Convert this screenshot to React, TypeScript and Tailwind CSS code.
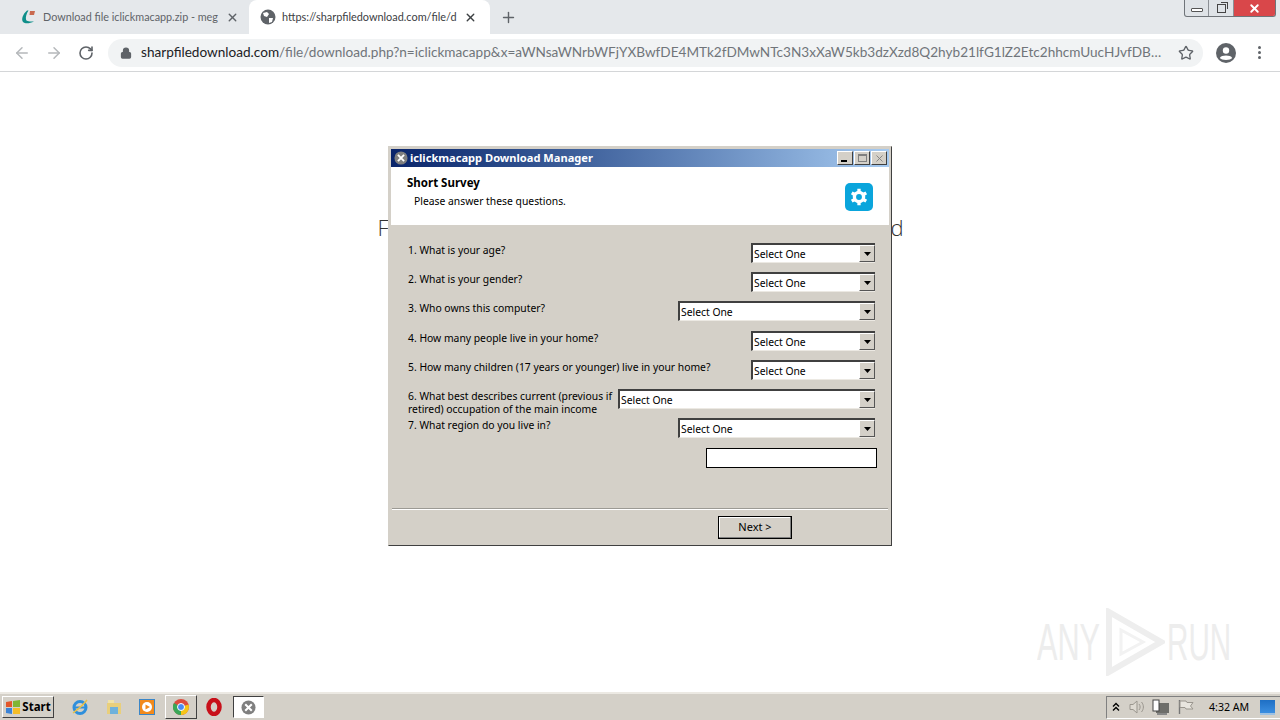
import { ArrowLeft, ArrowRight, Lock, Plus, RotateCw, Star, X } from "lucide-react";
import { JSX } from "react";

const UI_FONT = "font-['Noto_Sans',sans-serif]";

const QUESTIONS: { label: JSX.Element; width: string; height: string }[] = [
  { label: <>1. What is your age?</>, width: "w-[124px]", height: "h-[29px]" },
  { label: <>2. What is your gender?</>, width: "w-[124px]", height: "h-[29px]" },
  { label: <>3. Who owns this computer?</>, width: "w-[197px]", height: "h-[30px]" },
  { label: <>4. How many people live in your home?</>, width: "w-[124px]", height: "h-[29px]" },
  { label: <>5. How many children (17 years or younger) live in your home?</>, width: "w-[124px]", height: "h-[29px]" },
  {
    label: (
      <>
        6. What best describes current (previous if
        <br />
        retired) occupation of the main income
      </>
    ),
    width: "w-[257px]",
    height: "h-[29px]",
  },
  { label: <>7. What region do you live in?</>, width: "w-[197px]", height: "h-[29px]" },
];

const AppGlyph = ({ size }: { size: number }): JSX.Element => (
  <svg width={size} height={size} viewBox="0 0 16 16">
    <circle cx="8" cy="8" r="7.5" fill="#7f7f7f" />
    <path d="M4.5 4.5 L11.5 11.5 M11.5 4.5 L4.5 11.5" stroke="#fff" strokeWidth="2.2" />
  </svg>
);

const SelectBox = ({ width }: { width: string }): JSX.Element => (
  <div
    className={`${width} h-5 -mt-[1px] shrink-0 flex items-center justify-between bg-white border-t-2 border-l-2 border-t-[#404040] border-l-[#404040] border-b border-b-[#ece9e3]`}
  >
    <span className="pl-[1px] pt-[1px] text-[10.35px] leading-none text-black">Select One</span>
    <div className="w-[16px] h-[17px] flex items-center justify-center bg-[#d4d0c8] border-r border-b border-r-[#555] border-b-[#555] border-t border-l border-t-white border-l-white">
      <svg width="7" height="4" viewBox="0 0 7 4">
        <path d="M0 0 H7 L3.5 4 Z" fill="#000" />
      </svg>
    </div>
  </div>
);

const TitleButton = ({ children }: { children: JSX.Element }): JSX.Element => (
  <div className="w-[16px] h-[14px] flex items-center justify-center bg-[#d4d0c8] border-r border-b border-r-[#404040] border-b-[#404040] border-t border-l border-t-white border-l-white">
    {children}
  </div>
);

const Dialog = (): JSX.Element => (
  <div
    className={`absolute left-[388px] top-[146px] w-[504px] h-[400px] flex flex-col p-[2px] bg-[#d4d0c8] border border-t-[#d4d0c8] border-l-[#d4d0c8] border-r-[#404040] border-b-[#404040] ${UI_FONT}`}
  >
    <div className="h-[18px] shrink-0 flex items-center justify-between pl-[3px] pr-[2px] bg-gradient-to-r from-[#0a246a] to-[#a6caf0]">
      <div className="flex items-center gap-[2px]">
        <AppGlyph size={14} />
        <span className="-mt-[1px] text-[11.1px] font-bold text-white leading-none">iclickmacapp Download Manager</span>
      </div>
      <div className="flex items-center gap-[1px]">
        <TitleButton>
          <div className="w-[6px] h-[2px] mt-[6px] mr-[2px] bg-black" />
        </TitleButton>
        <TitleButton>
          <div className="w-[9px] h-[8px] border border-t-2 border-[#808080]" />
        </TitleButton>
        <TitleButton>
          <X size={11} strokeWidth={2} className="text-[#808080]" />
        </TitleButton>
      </div>
    </div>
    <div className="h-[58px] shrink-0 flex justify-between bg-white pl-[16px] pr-[16px]">
      <div className="pt-[9px] flex flex-col">
        <span className="text-[11.5px] font-bold leading-[14px] text-black">Short Survey</span>
        <span className="mt-[4px] pl-[7px] text-[10.35px] leading-[14px] text-black">Please answer these questions.</span>
      </div>
      <div className="mt-[16px] w-[28px] h-[28px] rounded-[5px] bg-[#0aa5dc] flex items-center justify-center">
        <svg width="20" height="20" viewBox="0 0 24 24" fill="none">
          <circle cx="12" cy="12" r="5.5" stroke="#fff" strokeWidth="4" />
          <path
            d="M12 2 V6 M12 18 V22 M3.3 7 L6.8 9 M17.2 15 L20.7 17 M3.3 17 L6.8 15 M17.2 9 L20.7 7"
            stroke="#fff"
            strokeWidth="4"
          />
        </svg>
      </div>
    </div>
    <div className="flex-1 flex flex-col pt-[19px]">
      <div className="flex flex-col pl-[17px] pr-[14px]">
        {QUESTIONS.map((q, i) => (
          <div key={i} className={`${q.height} flex justify-between items-start`}>
            <span className="text-[10.35px] leading-[13px] text-black whitespace-nowrap">{q.label}</span>
            <SelectBox width={q.width} />
          </div>
        ))}
        <div className="flex justify-end -mr-[2px]">
          <div className="w-[171px] h-[20px] bg-white border border-black" />
        </div>
      </div>
      <div className="mt-[40px] mx-[1px] border-t border-t-[#9c9a94] border-b border-b-white" />
      <div className="flex pl-[327px] pt-[6px]">
        <div className="w-[74px] h-[23px] flex items-center justify-center bg-[#d4d0c8] border border-black shadow-[inset_-1px_-1px_0_#808080,inset_1px_1px_0_#fff] text-[11px] text-black">
          Next &gt;
        </div>
      </div>
    </div>
  </div>
);

const Chrome = (): JSX.Element => (
  <div className="shrink-0 flex flex-col font-['Lato',sans-serif]">
    <div className="h-[34px] flex items-end bg-[#e5e8eb]">
      <div className="w-[249px] h-[34px] flex items-center pl-[20px] pr-[10px]">
        <svg width="16" height="16" viewBox="0 0 16 16" fill="none" className="shrink-0">
          <path d="M7 1.5 C3 5 1 10 3 13 C5 15 10 14.5 14 12.5 C10 12.5 6.5 12.5 6 10.5 C5.5 8 6.5 4.5 8.5 1.5 Z" fill="#0f8f8a" />
          <path d="M10 2 H15 L14 6 H9.5 Z" fill="#c96a50" />
        </svg>
        <span className="ml-[7px] whitespace-nowrap text-[10.8px] text-[#5f6368]">
          Download file iclickmacapp.zip - meg
        </span>
        <X size={13} strokeWidth={2.5} className="ml-auto text-[#5f6368]" />
      </div>
      <div className="w-[241px] h-[34px] flex items-center pl-[11px] pr-[13px] bg-white rounded-t-[8px]">
        <svg width="16" height="16" viewBox="0 0 16 16" className="shrink-0">
          <circle cx="8" cy="8" r="7.5" fill="#5f6368" />
          <path d="M3 4 L7 3 L9 5 L7 8 L4 7 Z M9 9 L13 9 L12 13 L9 14 Z" fill="#fff" />
        </svg>
        <span className="ml-[6px] whitespace-nowrap text-[10.9px] text-[#3c4043]">
          https://sharpfiledownload.com/file/d
        </span>
        <X size={13} strokeWidth={2.5} className="ml-auto text-[#3c4043]" />
      </div>
      <div className="ml-[10px] h-[34px] flex items-center">
        <Plus size={17} strokeWidth={2} className="text-[#5f6368]" />
      </div>
      <div className="ml-auto mr-[4px] self-start flex h-[17px] w-[92px] rounded-b-[3px] overflow-hidden border border-t-0 border-[#6f7479] bg-[#dfe3e7]">
        <div className="w-[24px] flex items-center justify-center border-r border-[#8c9095]">
          <div className="w-[12px] h-[4px] mt-[3px] border border-[#555] rounded-[1px] bg-white" />
        </div>
        <div className="w-[25px] flex items-center justify-center border-r border-[#8c9095]">
          <div className="relative w-[9px] h-[9px] mt-[1px] border border-[#444] bg-[#dfe3e7] shadow-[2px_-2px_0_-1px_#dfe3e7,3px_-3px_0_-1px_#444]" />
        </div>
        <div className="flex-1 flex items-center justify-center bg-[#d9474a]">
          <X size={13} strokeWidth={3.5} className="text-white" />
        </div>
      </div>
    </div>
    <div className="h-[38px] flex items-center bg-white border-b border-[#d4d6d8]">
      <ArrowLeft size={18} strokeWidth={2} className="ml-[13px] text-[#b5b8bb]" />
      <ArrowRight size={18} strokeWidth={2} className="ml-[14px] text-[#b5b8bb]" />
      <RotateCw size={16} strokeWidth={2.4} className="ml-[15px] text-[#5f6368]" />
      <div className="ml-[14px] w-[1095px] h-[28px] flex items-center pl-[12px] pr-[9px] rounded-full bg-[#f1f3f4]">
        <Lock size={12} strokeWidth={2.5} fill="#5f6368" className="text-[#5f6368] shrink-0" />
        <span className="ml-[9px] -mt-[1px] whitespace-nowrap text-[13.6px] text-[#70757a]">
          <span className="text-[#202124]">sharpfiledownload.com</span>
          /file/download.php?n=iclickmacapp&amp;x=aWNsaWNrbWFjYXBwfDE4MTk2fDMwNTc3N3xXaW5kb3dzXzd8Q2hyb21lfG1lZ2Etc2hhcmUucHJvfDB…
        </span>
        <Star size={16} strokeWidth={2} className="ml-auto text-[#5f6368]" />
      </div>
      <svg width="20" height="20" viewBox="0 0 20 20" className="ml-[13px]">
        <circle cx="10" cy="10" r="10" fill="#5f6368" />
        <circle cx="10" cy="7.5" r="3.2" fill="#fff" />
        <path d="M3.8 15 C5.5 11.8 14.5 11.8 16.2 15 C14.5 17.5 5.5 17.5 3.8 15 Z" fill="#fff" />
      </svg>
      <div className="ml-[22px] flex flex-col gap-[2px]">
        <div className="w-[3px] h-[3px] rounded-full bg-[#5f6368]" />
        <div className="w-[3px] h-[3px] rounded-full bg-[#5f6368]" />
        <div className="w-[3px] h-[3px] rounded-full bg-[#5f6368]" />
      </div>
    </div>
  </div>
);

const Taskbar = (): JSX.Element => (
  <div className="shrink-0 h-[28px] flex items-center bg-[#d4d0c8] border-t-2 border-t-[#ece9e3] font-['Noto_Sans',sans-serif]">
    <div className="ml-[2px] w-[52px] h-[22px] flex items-center justify-center gap-[1px] bg-[#d4d0c8] border border-t-white border-l-white border-r-[#404040] border-b-[#404040]">
      <svg width="16" height="15" viewBox="0 0 16 15">
        <path d="M1 2 L7 1 L7 7 L1 7 Z" fill="#e2572b" />
        <path d="M8 1 L15 0 L15 7 L8 7 Z" fill="#7fb534" />
        <path d="M1 8 L7 8 L7 14 L1 13 Z" fill="#3b83d6" />
        <path d="M8 8 L15 8 L15 14 L8 14 Z" fill="#f4bd27" />
      </svg>
      <span className="text-[11.5px] font-bold text-black leading-none">Start</span>
    </div>
    <svg width="18" height="18" viewBox="0 0 18 18" className="ml-[17px]" fill="none">
      <circle cx="9" cy="9.5" r="6" stroke="#2f8fdc" strokeWidth="3" />
      <path d="M3 9.5 H15" stroke="#2f8fdc" strokeWidth="2" />
      <path d="M2 15 C6 12 13 6 16 2" stroke="#e8c048" strokeWidth="1.5" />
    </svg>
    <svg width="16" height="16" viewBox="0 0 16 16" className="ml-[17px]">
      <path d="M1 4 H15 V15 H1 Z" fill="#e9cf7b" />
      <path d="M4 8 H12 V15 H4 Z" fill="#6fb1dc" />
      <path d="M2 1 H8 V4 H2 Z" fill="#f1e3a8" />
    </svg>
    <div className="ml-[17px] w-[16px] h-[16px] flex items-center justify-center bg-[#f28a1c] border border-[#3a86c8]">
      <svg width="10" height="10" viewBox="0 0 10 10">
        <circle cx="5" cy="5" r="5" fill="#fff" />
        <path d="M3.5 2.5 L8 5 L3.5 7.5 Z" fill="#f28a1c" />
      </svg>
    </div>
    <div className="ml-[10px] w-[32px] h-[24px] flex items-center justify-center border border-t-white border-l-white border-r-[#404040] border-b-[#404040]">
      <svg width="16" height="16" viewBox="0 0 16 16">
        <circle cx="8" cy="8" r="8" fill="#dd4b3e" />
        <path d="M8 8 L15.5 5.5 A8 8 0 0 1 8 16 Z" fill="#f5c518" />
        <path d="M8 8 L8 16 A8 8 0 0 1 1 4 Z" fill="#3aa757" />
        <circle cx="8" cy="8" r="3.5" fill="#4a8af4" stroke="#fff" />
      </svg>
    </div>
    <svg width="16" height="18" viewBox="0 0 16 18" className="ml-[9px]" fill="none">
      <ellipse cx="8" cy="9" rx="5.5" ry="7" stroke="#c8101a" strokeWidth="4.5" />
    </svg>
    <div className="ml-[11px] w-[31px] h-[22px] flex items-center justify-center bg-white border border-t-[#404040] border-l-[#404040] border-r-white border-b-white">
      <AppGlyph size={15} />
    </div>
    <div className="ml-auto w-[174px] h-[23px] flex items-center border-l border-t border-l-[#808080] border-t-[#808080] border-b border-b-white">
      <svg width="8" height="10" viewBox="0 0 8 10" className="ml-[5px]" fill="none">
        <path d="M1 4.5 L4 1.5 L7 4.5 M1 8.5 L4 5.5 L7 8.5" stroke="#000" strokeWidth="1.4" />
      </svg>
      <svg width="18" height="16" viewBox="0 0 18 16" className="ml-[8px]" fill="none">
        <path d="M2 5.5 H5 L9 2 V14 L5 10.5 H2 Z" fill="#dedad2" stroke="#9a968e" />
        <path d="M11 5 C12.5 7 12.5 9 11 11 M13.5 3 C16 6 16 10 13.5 13" stroke="#9a968e" />
      </svg>
      <svg width="18" height="16" viewBox="0 0 18 16" className="ml-[6px]">
        <rect x="4" y="4" width="13" height="10" fill="#6e6e6a" />
        <rect x="1" y="1" width="6" height="11" fill="#fff" stroke="#444" />
        <rect x="5" y="14" width="10" height="2" fill="#888" />
      </svg>
      <svg width="16" height="16" viewBox="0 0 16 16" className="ml-[8px]" fill="none">
        <path d="M1.5 1 V15" stroke="#777" strokeWidth="1.4" />
        <path d="M2 2 H8 L9 3.5 H15 L12.5 7 L15 10 H8 L7 8.5 H2 Z" fill="#e8e5de" stroke="#9a968e" />
      </svg>
      <span className="ml-[15px] text-[10.6px] text-black leading-none whitespace-nowrap">4:32 AM</span>
      <div className="ml-auto mr-[5px] w-[15px] h-[15px] bg-gradient-to-b from-[#1e6fc4] to-[#3b8ee0] border-b-2 border-[#9ec1e2]" />
    </div>
  </div>
);

const Watermark = (): JSX.Element => (
  <div className="absolute left-[1037px] top-[608px] h-[68px] flex items-center font-['Liberation_Sans',sans-serif] text-[#ededed] text-[52px] leading-none">
    <span className="inline-block w-[64px] origin-left scale-x-[0.59]">ANY</span>
    <svg width="62" height="68" viewBox="0 0 62 68" fill="none" className="ml-[2px] mr-[2px] shrink-0">
      <path d="M6 4 V64 L58 34 Z" stroke="#eeeeee" strokeWidth="6" />
      <path d="M18 22 V46 L40 34 Z" stroke="#f2f2f2" strokeWidth="3" />
    </svg>
    <span className="inline-block w-[64px] origin-left scale-x-[0.57]">RUN</span>
  </div>
);

const App = (): JSX.Element => {
  return (
    <div className="relative w-[1280px] h-[720px] flex flex-col overflow-hidden bg-white">
      <Chrome />
      <div className="flex-1 flex justify-center pt-[141px]">
        <div className="ml-[1px] w-[526px] h-fit flex justify-between font-['Open_Sans',sans-serif] text-[22px] leading-[28px] font-light text-[#333] whitespace-nowrap">
          <span>File iclickmacapp.zip is</span>
          <span>ready for download</span>
        </div>
      </div>
      <Taskbar />
      <Dialog />
      <Watermark />
    </div>
  );
};

export default App;
